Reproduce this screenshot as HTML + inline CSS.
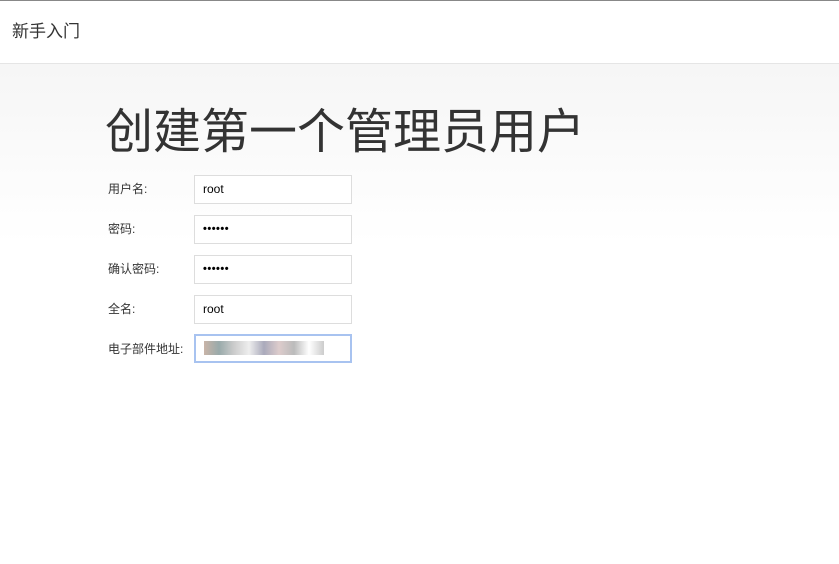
<!DOCTYPE html>
<html><head><meta charset="utf-8"><style>
body{margin:0;width:839px;height:564px;overflow:hidden;font-family:"Liberation Sans","Noto Sans CJK SC",sans-serif;background:#fff;color:#333;}
.top{height:62px;border-top:1px solid #888;border-bottom:1px solid #e5e5e5;background:#fff;position:relative}
.top span{position:absolute;left:12px;top:16px;font-size:17px;color:#333}
.main{height:300px;background:linear-gradient(#f6f6f6,#fff 180px);position:relative}
h1{position:absolute;left:105px;top:28px;margin:0;font-weight:normal;font-size:48px;color:#333}
.row{position:absolute;left:108px;font-size:12px;color:#333}
.in{position:absolute;left:194px;border:1px solid #ddd;background:#fff;font-size:12px;line-height:27px;padding-left:8px;box-sizing:border-box;width:158px;height:29px;color:#000}
.pw{font-size:11px;letter-spacing:0.5px;font-weight:bold}
.f{border:2px solid #a8c3f0}
</style></head><body>
<div class="top"><span>新手入门</span></div>
<div class="main">
<h1>创建第一个管理员用户</h1>
<div class="row" style="top:116px">用户名:</div><div class="in" style="top:111px">root</div>
<div class="row" style="top:156px">密码:</div><div class="in pw" style="top:151px">••••••</div>
<div class="row" style="top:196px">确认密码:</div><div class="in pw" style="top:191px">••••••</div>
<div class="row" style="top:236px">全名:</div><div class="in" style="top:231px">root</div>
<div class="row" style="top:276px">电子部件地址:</div><div class="in f" style="top:270px"><span style="display:inline-block;width:120px;height:14px;margin-top:5px;background:linear-gradient(90deg,#c9b4a8,#9aa,#ccc,#eee,#aab,#dcc,#bbb,#fff,#ccc);vertical-align:top"></span></div>
</div>
</body></html>
